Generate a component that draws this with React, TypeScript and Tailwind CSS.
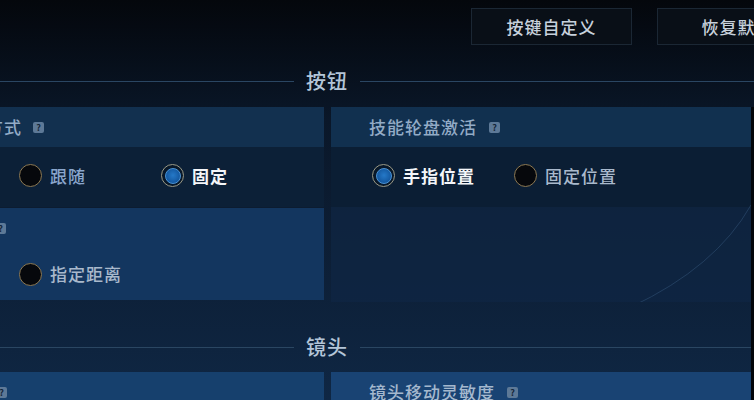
import React from 'react'

function Radio({ checked }: { checked: boolean }) {
    if (checked) {
        return (
            <span className="flex h-[23px] w-[23px] shrink-0 items-center justify-center rounded-full border-[1.5px] border-[#9b9a86] bg-[#08182a]">
                <span className="h-[16px] w-[16px] rounded-full border-[1.5px] border-[#4a93d6] bg-[radial-gradient(circle_at_50%_45%,#2579c8,#0c4a90)]" />
            </span>
        )
    }
    return <span className="h-[23px] w-[23px] shrink-0 rounded-full border-[1.5px] border-[#8c7954] bg-[#06080c]" />
}

function Help() {
    return (
        <span className="flex h-[11px] w-[11px] shrink-0 items-center justify-center rounded-[2px] bg-[#5d7997] text-[9px] font-bold leading-none text-[#15263a]">
            ?
        </span>
    )
}

function Option({ label, checked, tone = 'text-[#a3b6cc]' }: { label: string; checked?: boolean; tone?: string }) {
    return (
        <div className="flex w-[142px] items-center gap-[8px]">
            <Radio checked={!!checked} />
            <span
                className={
                    checked
                        ? 'text-[17px] font-bold tracking-[1px] text-[#f4f6f9]'
                        : 'text-[17px] font-medium tracking-[1px] ' + tone
                }
            >
                {label}
            </span>
        </div>
    )
}

function SectionTitle({ title }: { title: string }) {
    return (
        <div className="flex h-[38px] items-center">
            <div className="h-px w-[294px] bg-[#2a4662]" />
            <span className="mx-[12px] text-[20px] font-medium leading-none tracking-[1px] text-[#b3c5d8]">{title}</span>
            <div className="h-px flex-1 bg-[#2a4662]" />
        </div>
    )
}

export default function App() {
    return (
        <div className="h-[400px] w-[754px] overflow-hidden bg-linear-to-b from-[#04070c] via-[#0a1729] via-30% to-[#0f2744] font-['Noto_Sans_CJK_SC',sans-serif]">
            {/* top buttons */}
            <div className="-mr-[64px] flex h-[62px] items-start justify-end gap-[25px] pt-[8px]">
                <button className="flex h-[37px] w-[161px] items-center justify-center border border-[#1b2734] bg-[#090f17] text-[17px] font-medium tracking-[1px] text-[#c7d1dc]">
                    按键自定义
                </button>
                <button className="flex h-[37px] w-[161px] items-center justify-center border border-[#1b2734] bg-[#090f17] text-[17px] font-medium tracking-[1px] text-[#c7d1dc]">
                    恢复默认
                </button>
            </div>

            <SectionTitle title="按钮" />

            <div className="mt-[7px] flex">
                <div className="w-[751px]">
                    {/* button settings */}
                    <div className="flex gap-[7px]">
                        <div className="flex w-[324px] flex-col gap-px">
                            <div className="overflow-hidden">
                                <div className="flex h-[40px] items-center gap-[11px] bg-[#12304f]">
                                    <span className="-ml-[86px] text-[17px] font-medium tracking-[1px] text-[#93abc6]">摇杆移动方式</span>
                                    <Help />
                                </div>
                                <div className="flex h-[60px] items-center bg-[#0c2037] pb-[3px] pl-[19px]">
                                    <Option label="跟随" tone="text-[#8aa6cc]" />
                                    <Option label="固定" checked />
                                </div>
                            </div>
                            <div className="overflow-hidden bg-[#13365f]">
                                <div className="flex h-[40px] items-center gap-[12px]">
                                    <span className="-ml-[125px] text-[17px] font-medium tracking-[1px] text-[#93abc6]">施法距离设置</span>
                                    <Help />
                                </div>
                                <div className="flex h-[52px] items-center pl-[19px]">
                                    <Option label="指定距离" tone="text-[#a9b9cc]" />
                                </div>
                            </div>
                        </div>

                        <div className="relative w-[420px] overflow-hidden">
                            <div className="flex h-[40px] items-center gap-[12px] bg-[#11304f] pl-[38px]">
                                <span className="text-[17px] font-medium tracking-[1px] text-[#93abc6]">技能轮盘激活</span>
                                <Help />
                            </div>
                            <div className="flex h-[60px] items-center bg-[#0b1e34] pb-[3px] pl-[41px]">
                                <Option label="手指位置" checked />
                                <Option label="固定位置" tone="text-[#a9b9cc]" />
                            </div>
                            <div className="h-[95px] bg-[#0f2644]/70" />
                            <svg className="absolute inset-0" width="420" height="195" viewBox="0 0 420 195" fill="none">
                                <path d="M420 98 Q385 160 300 200" stroke="#3a5d82" strokeOpacity="0.45" strokeWidth="1" />
                            </svg>
                        </div>
                    </div>

                    <div className="mt-[26px]">
                        <SectionTitle title="镜头" />
                    </div>

                    {/* camera settings */}
                    <div className="mt-[6px] flex gap-[7px]">
                        <div className="w-[324px] overflow-hidden bg-[#16406d]">
                            <div className="flex h-[40px] items-center gap-[12px]">
                                <span className="-ml-[124px] text-[17px] font-medium tracking-[1px] text-[#93abc6]">镜头拖动方式</span>
                                <Help />
                            </div>
                        </div>
                        <div className="w-[420px] bg-[#194373]">
                            <div className="flex h-[40px] items-center gap-[12px] pl-[38px]">
                                <span className="text-[17px] font-medium tracking-[1px] text-[#a4b8ce]">镜头移动灵敏度</span>
                                <Help />
                            </div>
                        </div>
                    </div>
                </div>
                <div className="w-[3px] bg-[#03060a]" />
            </div>
        </div>
    )
}
